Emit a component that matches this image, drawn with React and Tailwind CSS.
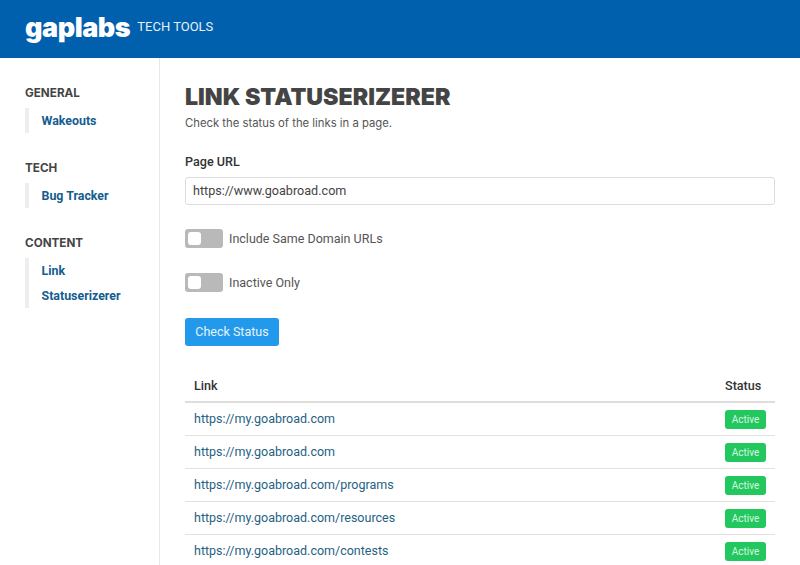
import React from 'react'

const nav = [
  { title: 'GENERAL', links: ['Wakeouts'] },
  { title: 'TECH', links: ['Bug Tracker'] },
  { title: 'CONTENT', links: ['Link Statuserizerer'] },
]

const rows = [
  'https://my.goabroad.com',
  'https://my.goabroad.com',
  'https://my.goabroad.com/programs',
  'https://my.goabroad.com/resources',
  'https://my.goabroad.com/contests',
]

const Toggle = ({ label }) => (
  <div className="flex items-center gap-[6px] h-[19px]">
    <div className="w-[38px] h-[19px] bg-[#b9b9b9] rounded-[3px] flex items-center pl-[3px]">
      <div className="w-[13px] h-[13px] bg-white rounded-[3px]"></div>
    </div>
    <span className="text-[12.5px] pt-[2px] text-[#555555]">{label}</span>
  </div>
)

const App = () => {
  return (
    <div className="w-[800px] h-[565px] overflow-hidden bg-white flex flex-col font-['Roboto',sans-serif]">
      {/* Header */}
      <header className="h-[58px] shrink-0 bg-[#0160ae] flex items-center pl-[25px] text-white">
        <span className="font-['Inter',sans-serif] font-black text-[27px] leading-none tracking-[-0.45px] pb-[3px]">gaplabs</span>
        <span className="ml-[7px] text-[13px] pb-[5px] text-[#e6eff7]">TECH TOOLS</span>
      </header>

      <div className="flex flex-1 min-h-0">
        {/* Sidebar */}
        <aside className="w-[160px] shrink-0 border-r border-[#e8e8e8] pl-[25px] pt-[27px] flex flex-col gap-[27px]">
          {nav.map((group) => (
            <div key={group.title}>
              <h4 className="font-['Inter',sans-serif] font-bold text-[11.7px] leading-[16px] text-[#444444] mb-[7px]">{group.title}</h4>
              <ul className="border-l-[4px] border-[#eeeeee] pl-[12.5px]">
                {group.links.map((link) => (
                  <li key={link} className="text-[12.4px] font-bold leading-[25px] text-[#155d8f] w-[90px]">{link}</li>
                ))}
              </ul>
            </div>
          ))}
        </aside>

        {/* Main */}
        <main className="flex-1 min-w-0 pl-[25px] pr-[25px] pt-[25px]">
          <h1 className="font-['Inter',sans-serif] font-black text-[23.2px] leading-[28px] text-[#444444]">LINK STATUSERIZERER</h1>
          <p className="font-['Inter',sans-serif] text-[11.3px] leading-[16px] mt-[4px] text-[#555555]">Check the status of the links in a page.</p>

          <label className="block mt-[23px] text-[12.6px] font-medium leading-[16px] text-[#333333]">Page URL</label>
          <div className="mt-[7px] h-[28px] border border-[#dddddd] rounded-[3px] flex items-center pl-[7px] text-[12.6px] text-[#444444]">https://www.goabroad.com</div>

          <div className="mt-[24px] flex flex-col gap-[25px]">
            <Toggle label="Include Same Domain URLs" />
            <Toggle label="Inactive Only" />
          </div>

          <button className="mt-[26px] h-[28px] w-[94px] bg-[#2299ea] rounded-[3px] text-[12.5px] text-[#e6f3fc] flex items-center justify-center">Check Status</button>

          {/* Results */}
          <table className="mt-[24px] w-full border-collapse">
            <thead>
              <tr className="border-b-[2px] border-[#dddddd] h-[32px]">
                <th className="text-left pl-[9px] pt-[2px] text-[12.6px] font-medium text-[#333333]">Link</th>
                <th className="text-left w-[50px] pt-[2px] text-[12.6px] font-medium text-[#333333]">Status</th>
              </tr>
            </thead>
            <tbody>
              {rows.map((url, i) => (
                <tr key={i} className="border-b border-[#e2e2e2] h-[33px]">
                  <td className="pl-[9px] pt-[1px] text-[12.5px] text-[#1f6283]">{url}</td>
                  <td className="pt-[2px]">
                    <span className="flex items-center justify-center w-[41px] h-[19px] bg-[#22c85e] rounded-[3px] text-[10px] text-[#d8f5e3]">Active</span>
                  </td>
                </tr>
              ))}
            </tbody>
          </table>
        </main>
      </div>
    </div>
  )
}

export default App
